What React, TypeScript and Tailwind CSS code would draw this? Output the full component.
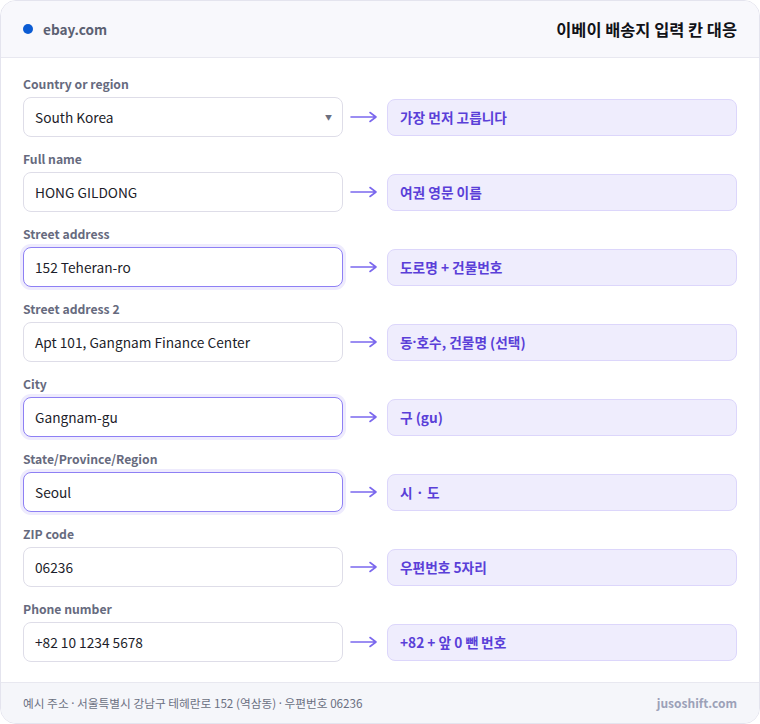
import React from 'react';

interface Row {
  label: string;
  value: string;
  note: React.ReactNode;
  focused?: boolean;
  select?: boolean;
}

// narrow latin middle dot instead of the full-width CJK one
const Dot = () => <span style={{ fontFamily: '"Noto Sans", sans-serif' }}>·</span>;

const rows: Row[] = [
  { label: 'Country or region', value: 'South Korea', note: '가장 먼저 고릅니다', select: true },
  { label: 'Full name', value: 'HONG GILDONG', note: '여권 영문 이름' },
  { label: 'Street address', value: '152 Teheran-ro', note: '도로명 + 건물번호', focused: true },
  { label: 'Street address 2', value: 'Apt 101, Gangnam Finance Center', note: <>동<Dot />호수, 건물명 (선택)</> },
  { label: 'City', value: 'Gangnam-gu', note: '구 (gu)', focused: true },
  { label: 'State/Province/Region', value: 'Seoul', note: '시 · 도', focused: true },
  { label: 'ZIP code', value: '06236', note: '우편번호 5자리' },
  { label: 'Phone number', value: '+82 10 1234 5678', note: '+82 + 앞 0 뺀 번호' },
];

const Arrow = () => (
  <svg width="28" height="12" viewBox="0 0 28 12" fill="none" className="text-[#7b68ee]">
    <path d="M1 6h25M20 1.5 26 6l-6 4.5" stroke="currentColor" strokeWidth="1.6" strokeLinecap="round" strokeLinejoin="round" />
  </svg>
);

const FieldRow: React.FC<{ row: Row }> = ({ row }) => (
  <div>
    <div className="text-[12.2px] leading-[18px] font-semibold text-[#666a7e] mb-1">{row.label}</div>
    <div className="grid grid-cols-[320px_44px_1fr] items-center">
      <div
        className={`h-10 rounded-lg bg-white flex items-center justify-between pl-[11px] pr-[10px] text-[13.7px] text-[#1c1d2a] ${
          row.focused
            ? 'border-[1.5px] border-[#8e80f4] ring-[3px] ring-[#eeebfd]'
            : 'border border-[#dedde8]'
        }`}
      >
        <span>{row.value}</span>
        {row.select && <span className="text-[7px] text-[#6b6f80]">▼</span>}
      </div>
      <div className="flex justify-center pr-0.5">
        <Arrow />
      </div>
      <div className="h-[37px] rounded-lg bg-[#efedfd] border border-[#dcd6fb] flex items-center px-[12px] text-[13.7px] font-bold text-[#5a3fd8]">
        {row.note}
      </div>
    </div>
  </div>
);

export default function App() {
  return (
    <div className="w-[760px] h-[724px] bg-white" style={{ fontFamily: '"Noto Sans CJK KR", "Noto Sans", sans-serif' }}>
      <div className="h-full rounded-2xl border border-[#e4e4ee] overflow-hidden flex flex-col bg-white">
        <header className="h-[57px] shrink-0 bg-[#f8f8fc] border-b border-[#e8e8f0] flex items-center justify-between px-[22px]">
          <div className="flex items-center gap-[10px]">
            <span className="w-[10px] h-[10px] rounded-full bg-[#0b5bd3]" />
            <span className="text-[13.6px] font-semibold text-[#5b6072]">ebay.com</span>
          </div>
          <h1 className="text-[16.4px] font-bold text-[#111218]">이베이 배송지 입력 칸 대응</h1>
        </header>

        <main className="flex-1 px-[22px] pt-[17px] flex flex-col gap-[13px]">
          {rows.map((r) => (
            <FieldRow key={r.label} row={r} />
          ))}
        </main>

        <footer className="h-[41px] shrink-0 bg-[#f5f6fa] border-t border-[#e8e8f0] flex items-center justify-between px-[22px]">
          <span className="text-[11.7px] text-[#6b7082]">
            예시 주소 <Dot /> 서울특별시 강남구 테헤란로 152 (역삼동) <Dot /> 우편번호 06236
          </span>
          <span className="text-[12px] font-semibold text-[#9ca1b8]">jusoshift.com</span>
        </footer>
      </div>
    </div>
  );
}
